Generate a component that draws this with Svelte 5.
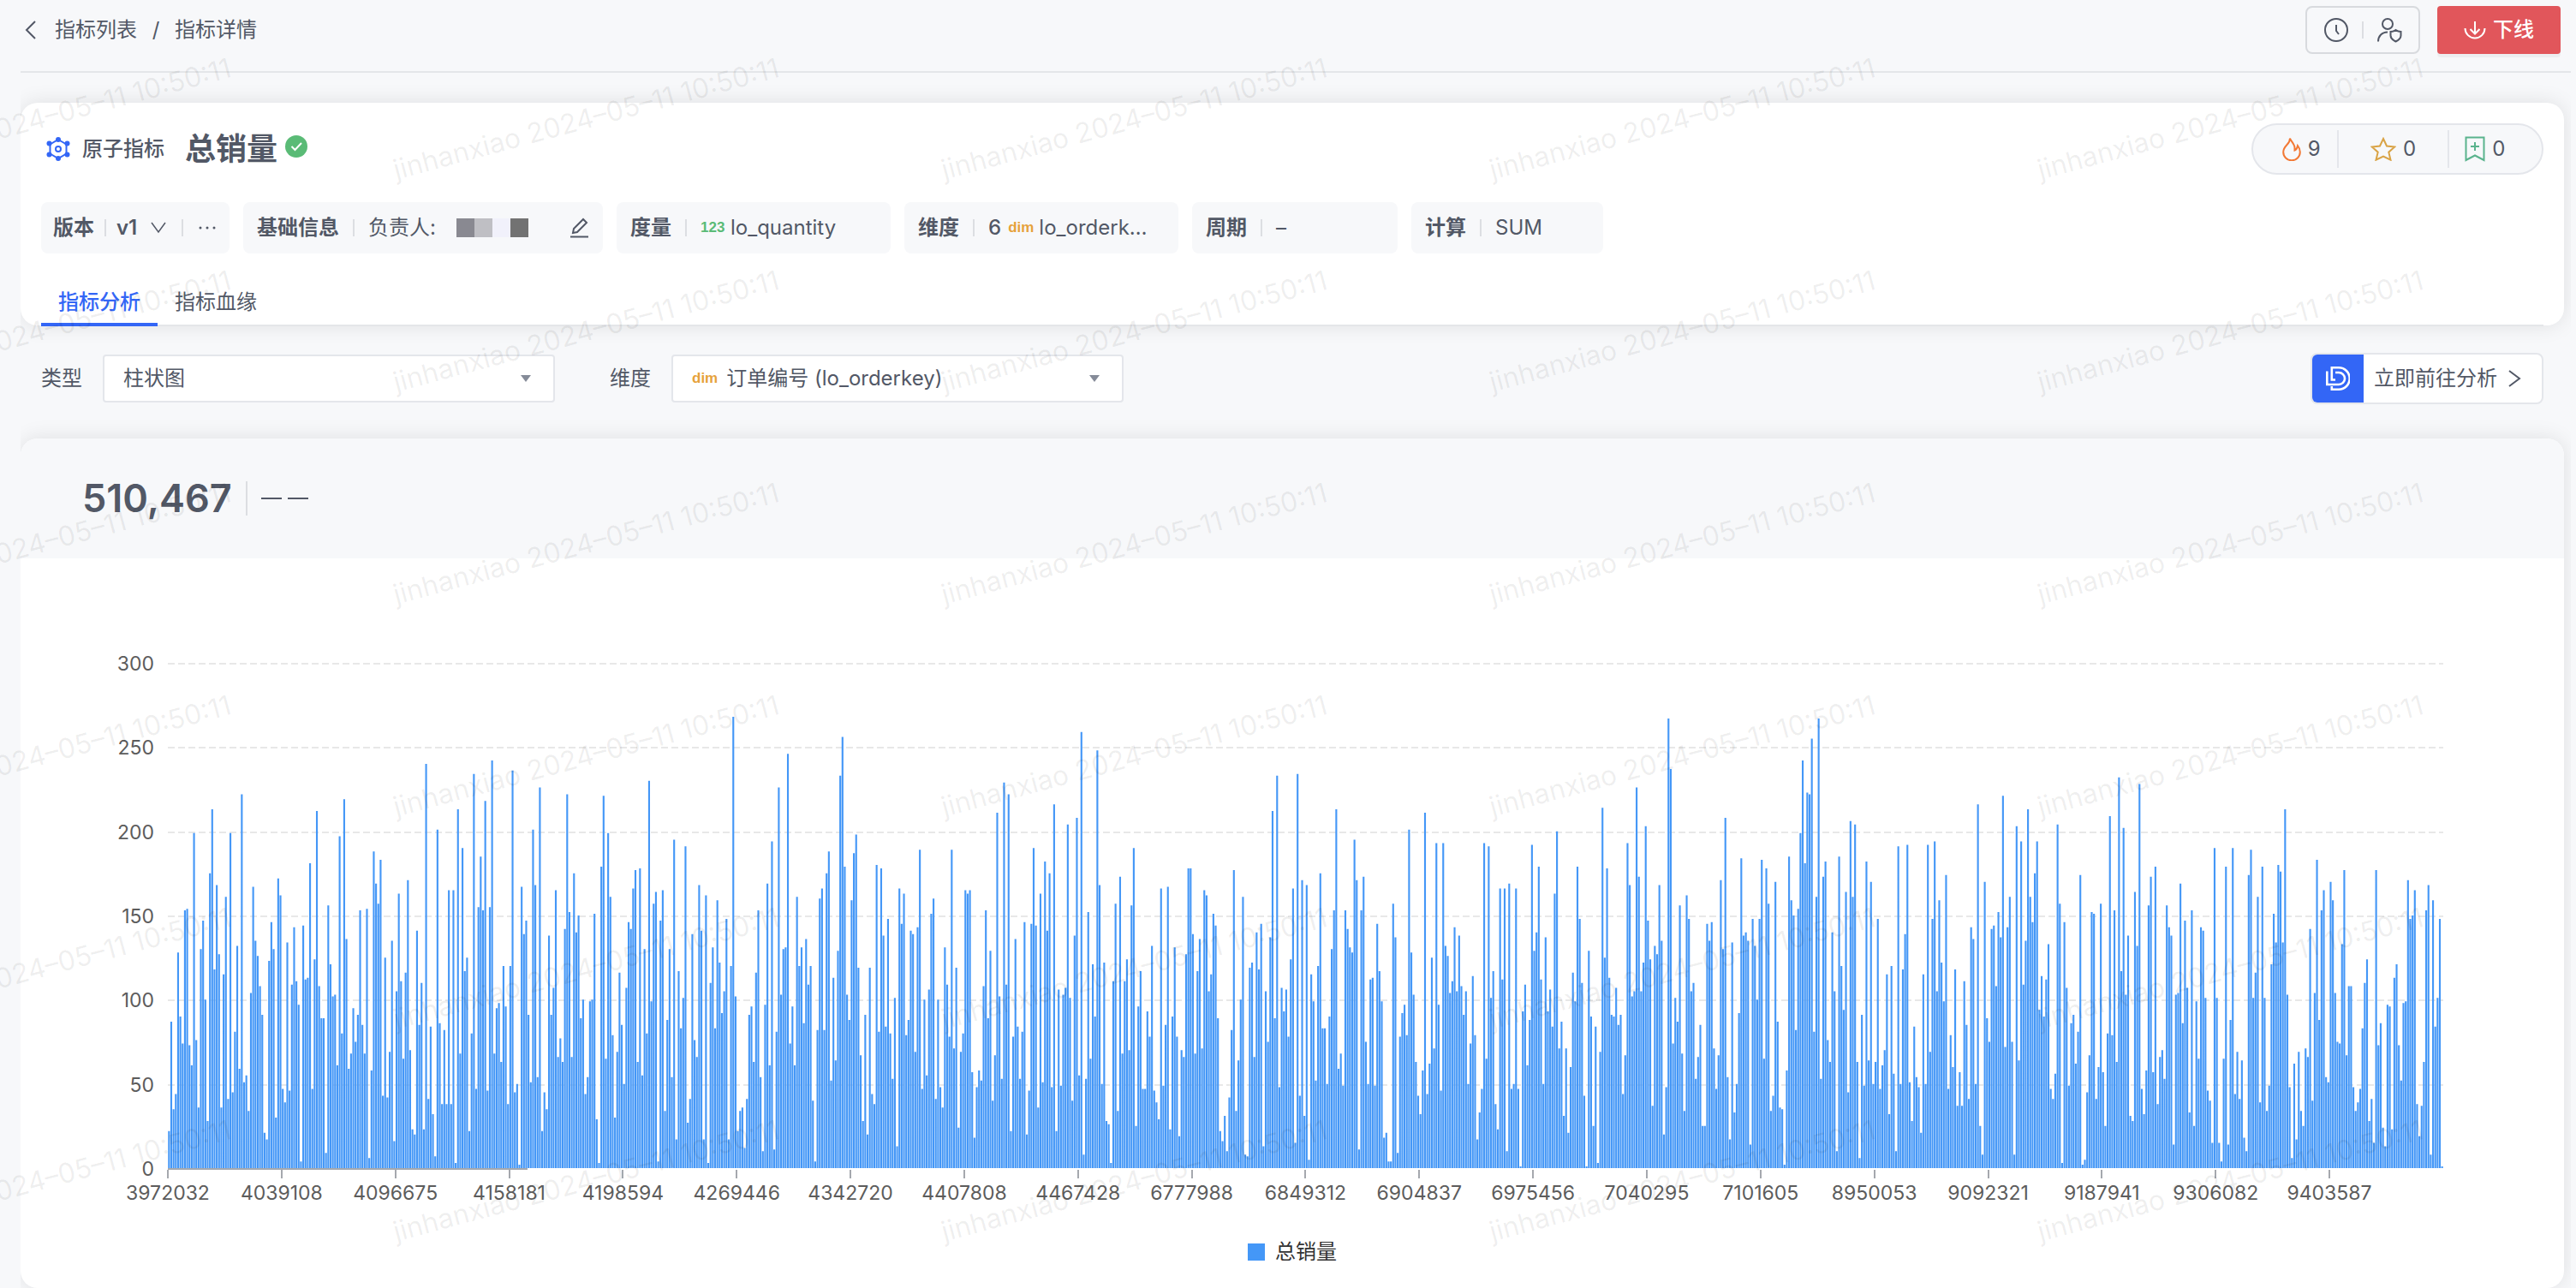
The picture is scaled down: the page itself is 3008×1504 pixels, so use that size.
<script>
  // quantity per lo_orderkey, in axis order
  const quantities = `
    22 87 35 44 128 90 74 153 154 73 61 199 76 36 130 147 100 28 175 213 118 168 127 36 115
    161 41 199 45 81 132 59 222 51 55 34 104 167 135 126 108 91 21 17 123 146 130 30 172 162
    47 39 134 46 109 143 111 97 4 144 112 113 181 47 124 212 108 89 89 9 156 121 102 103 61
    197 80 219 136 59 68 95 75 91 153 85 68 154 6 58 188 169 157 183 43 125 42 69 135 16
    105 163 111 65 116 171 70 23 20 141 85 110 23 240 41 84 32 7 201 86 38 82 38 165 38
    165 3 213 68 190 117 125 22 80 234 47 155 185 153 218 46 155 242 68 95 98 63 120 96 38
    120 236 45 50 2 167 139 147 91 51 201 168 54 226 22 45 35 138 91 107 165 66 77 63 142
    222 152 66 175 140 150 89 100 44 54 99 100 151 29 3 179 221 65 199 161 79 30 69 116 85
    50 107 146 142 166 177 63 178 55 130 80 230 99 157 164 4 147 165 34 88 130 54 195 17 117
    83 101 191 27 41 139 76 66 168 141 17 162 3 110 131 83 159 122 92 105 148 17 120 268 102
    22 34 36 12 41 91 96 63 116 153 54 10 97 169 61 194 11 81 226 103 130 131 246 74 96
    61 161 120 131 86 136 109 120 40 4 82 160 166 82 175 188 52 113 64 129 233 256 179 103 88
    159 187 198 119 67 28 91 20 119 44 38 180 81 178 138 84 148 80 53 101 13 166 145 163 79
    88 141 139 69 143 189 47 100 55 106 151 160 41 100 48 36 131 109 78 189 71 119 24 69 80
    165 163 165 57 18 48 58 52 108 153 89 129 40 67 211 102 53 229 109 222 22 78 136 84 53
    81 146 20 46 145 190 144 36 163 51 182 141 175 48 216 22 106 49 103 107 204 101 40 138 208
    55 259 8 53 152 65 121 90 248 168 50 122 28 26 3 111 157 34 173 68 111 124 70 156 190
    25 96 117 47 47 93 78 132 46 39 29 166 49 85 167 23 90 131 78 19 70 66 127 178 178
    139 68 117 136 71 165 162 105 115 151 144 89 22 16 31 10 42 82 177 34 64 100 161 8 7
    119 122 66 140 118 145 13 105 75 137 212 89 233 48 107 93 106 78 124 166 15 234 43 171 31
    168 5 115 99 52 120 175 83 83 50 90 130 153 213 59 68 49 153 142 131 128 195 171 11 153
    173 75 50 112 113 49 145 117 99 18 21 4 4 157 137 9 78 92 97 79 201 128 103 63 43
    32 58 211 44 62 125 71 193 97 46 193 132 126 104 111 143 105 138 108 91 105 50 74 114 79
    17 33 47 193 65 191 101 117 38 23 166 112 166 10 169 47 50 166 47 1 93 109 61 88 192
    129 140 179 112 50 137 93 106 84 163 200 71 87 31 71 21 60 116 99 179 148 110 43 1 129
    90 25 84 3 69 214 125 178 113 91 90 107 85 91 44 67 193 168 102 105 226 173 105 122 203
    147 124 37 132 127 168 135 20 48 267 237 74 101 87 156 68 34 162 148 105 110 53 66 85 25
    25 145 135 146 71 47 67 171 130 208 54 17 134 33 50 92 184 138 140 135 14 148 132 100 148
    183 65 178 157 34 43 170 87 36 35 2 58 185 159 150 82 154 199 242 181 223 222 255 81 161
    267 53 173 182 76 63 140 105 10 185 120 94 164 45 206 161 204 63 6 91 49 182 64 170 50
    63 148 47 61 70 115 32 120 56 10 191 50 118 139 192 51 28 84 54 48 21 115 50 192 69
    148 194 105 159 122 99 174 47 79 60 118 37 57 37 111 85 41 143 136 50 216 25 8 170 89
    75 142 144 108 152 137 221 72 143 161 75 8 203 64 194 109 135 213 161 146 175 194 94 114 90
    112 133 47 41 56 204 157 3 146 107 49 86 91 62 81 174 2 5 45 67 152 151 41 60 157
    57 25 80 209 79 153 63 232 117 202 103 138 31 28 164 132 228 47 32 58 156 173 57 179 38
    66 70 53 156 143 138 14 103 104 169 86 147 107 33 153 25 99 65 143 141 101 46 40 15 190
    101 15 4 65 179 14 88 190 44 69 41 64 18 10 174 189 101 116 161 39 179 101 34 49 121
    151 134 180 176 134 213 103 48 6 62 17 69 34 25 71 66 142 40 104 183 88 153 165 54 51
    170 159 104 75 74 133 177 67 108 108 48 34 39 47 83 110 124 28 41 15 177 73 86 24 13
    97 96 23 113 121 73 52 98 99 171 148 150 165 38 19 37 63 153 168 8 159 84 101 148 1
  `
    .trim()
    .split(/\s+/)
    .map(Number);

  const maxValue = 300;
  const yTicks = [300, 250, 200, 150, 100, 50, 0];
  const xTicks = [
    3972032, 4039108, 4096675, 4158181, 4198594, 4269446, 4342720, 4407808,
    4467428, 6777988, 6849312, 6904837, 6975456, 7040295, 7101605, 8950053,
    9092321, 9187941, 9306082, 9403587,
  ];

  const barPath = quantities
    .map((v, i) => `M${i + 0.1} ${maxValue}V${maxValue - v}h.8V${maxValue}z`)
    .join("");

  const watermarks = Array(30).fill("jinhanxiao 2024–05–11 10:50:11");

  let tab = $state("analysis");
  let chartType = $state("bar");
  let dimension = $state("lo_orderkey");
</script>

<div class="page">
  <header class="topbar">
    <nav class="breadcrumb">
      <a class="back" href="#list" aria-label="返回">
        <svg width="16" height="24" viewBox="0 0 16 24"><path d="M13 2 3 12l10 10" /></svg>
      </a>
      <a href="#list">指标列表</a>
      <span class="slash">/</span>
      <span>指标详情</span>
    </nav>
    <div class="actions">
      <div class="icon-group">
        <button aria-label="历史">
          <svg width="30" height="30" viewBox="0 0 30 30">
            <circle cx="15" cy="15" r="13" />
            <path d="M15 9v7l3 4" />
          </svg>
        </button>
        <i class="divider"></i>
        <button aria-label="权限">
          <svg width="30" height="30" viewBox="0 0 30 30">
            <circle cx="13" cy="8" r="6" />
            <path d="M2 28.500c0-6 4-11 11-11" />
            <path d="M22.500 15c2 1.500 4 2 6 2v4.500c0 3-3 5.500-6 7-3-1.500-6-4-6-7V17c2 0 4-.5 6-2z" />
          </svg>
        </button>
      </div>
      <button class="offline">
        <svg width="26" height="24" viewBox="0 0 26 24">
          <path d="M13 2v14M7.500 11l5.500 5.500L18.500 11M1.500 10a11.500 11.500 0 0 0 23 0" />
        </svg>
        下线
      </button>
    </div>
  </header>

  <main>
    <section class="card info">
      <div class="title-row">
        <svg class="atom" width="28" height="28" viewBox="0 0 28 28">
          <path d="M14 3 23.500 8.500v11L14 25l-9.500-5.500v-11z" />
          <circle cx="14" cy="14" r="3" />
          <g class="dots">
            <circle cx="14" cy="3" r="3" /><circle cx="24.500" cy="7.500" r="3" />
            <circle cx="24.500" cy="20.500" r="3" /><circle cx="14" cy="25" r="3" />
            <circle cx="3.500" cy="20.500" r="3" /><circle cx="3.500" cy="7.500" r="3" />
          </g>
        </svg>
        <span class="kind">原子指标</span>
        <h1>总销量</h1>
        <svg class="ok" width="26" height="26" viewBox="0 0 26 26">
          <circle cx="13" cy="13" r="13" />
          <path d="m7.500 13 4 4 7.500-8" />
        </svg>
        <div class="pill">
          <button class="hot">
            <svg width="22" height="28" viewBox="0 0 22 28">
              <path d="M9 1.500c1 3 5.500 7 5.500 11v3c1.500-.5 3-3 3.500-5.500 2 2.500 2.800 5 2.800 7.500A9.800 9.800 0 0 1 1.200 17.500c0-3.500 2-6 4.300-8.500C7.500 7 9 4 9 1.500z" />
            </svg>
            9
          </button>
          <i class="divider"></i>
          <button class="star">
            <svg width="30" height="28" viewBox="0 0 30 28">
              <path d="m15 2 4 8.500 9.300 1-7 6.200 2.200 9L15 22.500l-8.500 4.200 2.200-9-7-6.200 9.300-1z" />
            </svg>
            0
          </button>
          <i class="divider"></i>
          <button class="mark">
            <svg width="24" height="30" viewBox="0 0 24 30">
              <path d="M1.500 1.500h21V28L12 22.500 1.500 28z" />
              <path d="M12 7v10M7 12h10" />
            </svg>
            0
          </button>
        </div>
      </div>

      <div class="chips">
        <div class="chip version">
          <b>版本</b>
          <i class="divider"></i>
          <button class="ver">
            v1
            <svg width="18" height="14" viewBox="0 0 18 14"><path d="m1 1 8 11 8-11" /></svg>
          </button>
          <i class="divider"></i>
          <button class="more" aria-label="更多">
            <svg width="20" height="6" viewBox="0 0 20 6">
              <circle cx="2" cy="3" r="1.500" /><circle cx="10" cy="3" r="1.500" /><circle cx="18" cy="3" r="1.500" />
            </svg>
          </button>
        </div>
        <div class="chip base">
          <b>基础信息</b>
          <i class="divider"></i>
          <span>负责人:</span>
          <span class="mosaic"><i></i><i></i><i></i><i></i></span>
          <button class="edit" aria-label="编辑">
            <svg width="24" height="24" viewBox="0 0 24 24">
              <path d="M2 22.500h21M5 18l1-5L17 2l4 4-11 11z" />
            </svg>
          </button>
        </div>
        <div class="chip wide">
          <b>度量</b>
          <i class="divider"></i>
          <span class="tag num">123</span>
          <span>lo_quantity</span>
        </div>
        <div class="chip wide">
          <b>维度</b>
          <i class="divider"></i>
          <span class="count">6</span>
          <span class="tag dim">dim</span>
          <span>lo_orderk…</span>
        </div>
        <div class="chip period">
          <b>周期</b>
          <i class="divider"></i>
          <span>–</span>
        </div>
        <div class="chip calc">
          <b>计算</b>
          <i class="divider"></i>
          <span>SUM</span>
        </div>
      </div>

      <div class="tabs">
        <button class:active={tab === "analysis"} onclick={() => (tab = "analysis")}>指标分析</button>
        <button class:active={tab === "lineage"} onclick={() => (tab = "lineage")}>指标血缘</button>
      </div>
    </section>

    <div class="filters">
      <label for="type">类型</label>
      <div class="select">
        <select id="type" bind:value={chartType}>
          <option value="bar">柱状图</option>
        </select>
        <svg class="caret" width="12" height="8" viewBox="0 0 12 8"><path d="M0 0h12L6 8z" /></svg>
      </div>
      <label for="dimension">维度</label>
      <div class="select">
        <span class="tag dim">dim</span>
        <select id="dimension" bind:value={dimension}>
          <option value="lo_orderkey">订单编号 (lo_orderkey)</option>
        </select>
        <svg class="caret" width="12" height="8" viewBox="0 0 12 8"><path d="M0 0h12L6 8z" /></svg>
      </div>
      <a class="goto" href="#analysis">
        <span class="logo">
          <svg width="28" height="28" viewBox="0 0 28 28">
            <path d="M1.300 5.500V21H15a7 7 0 0 0 0-14h-4M6.800 23v3.700H15a12.700 12.700 0 0 0 0-25.400H6.800v14.200H11" />
          </svg>
        </span>
        立即前往分析
        <svg class="arrow" width="16" height="22" viewBox="0 0 16 22"><path d="m2 2 12 9-12 9" /></svg>
      </a>
    </div>

    <section class="card result">
      <div class="summary">
        <strong>510,467</strong>
        <i class="divider"></i>
        <i class="dash"></i>
        <i class="dash"></i>
      </div>
      <div class="chart">
        <div class="y-axis">
          {#each yTicks as tick}
            <span>{tick}</span>
          {/each}
        </div>
        <div class="plot">
          <div class="gridlines">
            {#each yTicks as tick}
              <i class:base={tick === 0}></i>
            {/each}
          </div>
          <svg class="bars" viewBox="0 0 1000 300" preserveAspectRatio="none">
            <path d={barPath} />
          </svg>
        </div>
        <div class="x-axis">
          {#each xTicks as tick}
            <span>{tick}</span>
          {/each}
        </div>
      </div>
      <div class="legend"><i></i>总销量</div>
    </section>
  </main>

  <div class="watermark" aria-hidden="true">
    <div class="tiles">
      {#each watermarks as mark}
        <span><em>{mark}</em></span>
      {/each}
    </div>
  </div>
</div>

<style>
  :global(body) {
    background: #f7f8fa;
  }
  .page {
    position: relative;
    overflow: hidden;
    padding: 0 6px 0 24px;
    color: #525866;
    font: 24px/36px Inter, "Noto Sans CJK SC", sans-serif;
  }
  .page * {
    box-sizing: border-box;
  }
  svg {
    display: block;
    flex: none;
    fill: none;
    stroke: currentColor;
    stroke-width: 2;
  }
  button {
    display: flex;
    align-items: center;
    padding: 0;
    border: 0;
    background: none;
    color: inherit;
    font: inherit;
    cursor: pointer;
  }
  a {
    color: inherit;
    text-decoration: none;
  }
  .divider {
    flex: none;
    width: 2px;
    height: 20px;
    background: #dcdee2;
  }
  .topbar {
    display: flex;
    justify-content: space-between;
    height: 85px;
    padding: 7px 12px 0 0;
    border-bottom: 2px solid #e4e6e9;
  }
  .breadcrumb {
    display: flex;
    align-items: center;
    height: 56px;
    padding-left: 4px;
  }
  .back {
    margin-right: 20px;
  }
  .slash {
    width: 44px;
    text-align: center;
  }
  .actions {
    display: flex;
    gap: 20px;
    height: 56px;
  }
  .icon-group {
    display: flex;
    align-items: center;
    justify-content: space-between;
    width: 134px;
    padding: 0 19px;
    border: 2px solid #d8dade;
    border-radius: 8px;
  }
  .offline {
    justify-content: center;
    gap: 8px;
    width: 144px;
    border-radius: 4px;
    background: #e1565b;
    box-shadow: 0 4px 0 rgba(0, 0, 0, 0.04);
    color: #fff;
    font-weight: 500;
  }
  main {
    overflow: hidden;
    padding: 35px 8px 0 0;
  }
  .card {
    border-radius: 20px;
    background: #fff;
    box-shadow: 0 0 24px rgba(0, 0, 0, 0.1);
  }
  .info {
    height: 260px;
    padding: 24px 24px 0;
  }
  .title-row {
    display: flex;
    align-items: center;
    height: 60px;
    padding-left: 6px;
  }
  .atom {
    margin-right: 14px;
    color: #3366f6;
  }
  .atom .dots {
    fill: currentColor;
    stroke: none;
  }
  .kind {
    font-weight: 500;
  }
  h1 {
    margin: 0 9px 0 24px;
    font-size: 36px;
    line-height: 48px;
    font-weight: 600;
  }
  .ok {
    margin-bottom: 6px;
    stroke: #fff;
  }
  .ok circle {
    fill: #5abb76;
    stroke: none;
  }
  .pill {
    display: flex;
    align-items: center;
    width: 341px;
    height: 60px;
    margin-left: auto;
    padding: 0 24px 0 14px;
    border: 2px solid #e4e6eb;
    border-radius: 30px;
    background: #f7f8fa;
  }
  .pill button {
    flex: 2;
    justify-content: center;
    gap: 8px;
  }
  .pill .star {
    flex: 3;
  }
  .pill .divider {
    height: 44px;
    background: #e4e6eb;
  }
  .hot svg {
    color: #f27935;
  }
  .star svg {
    color: #d9a345;
  }
  .mark svg {
    color: #5ab38d;
  }
  .chips {
    display: flex;
    gap: 16px;
    margin-top: 32px;
  }
  .chip {
    display: flex;
    align-items: center;
    height: 60px;
    padding: 0 16px;
    border-radius: 8px;
    background: #f7f8fa;
  }
  .chip b {
    font-weight: 600;
  }
  .chip .divider {
    margin: 0 16px;
  }
  .version {
    width: 220px;
    padding-left: 14px;
  }
  .version .divider {
    margin: 0 12px;
  }
  .ver {
    gap: 16px;
    padding-right: 6px;
    font-weight: 600;
  }
  .ver svg {
    stroke-width: 1.500;
  }
  .more {
    flex: 1;
    justify-content: flex-end;
  }
  .more svg {
    fill: currentColor;
    stroke: none;
  }
  .base {
    width: 420px;
  }
  .mosaic {
    display: flex;
    margin-left: 24px;
  }
  .mosaic i {
    width: 21px;
    height: 22px;
    background: #898991;
  }
  .mosaic i:nth-child(2) {
    background: #bfbfc4;
  }
  .mosaic i:nth-child(3) {
    background: #f1f1fb;
  }
  .mosaic i:nth-child(4) {
    background: #727272;
  }
  .edit {
    margin-left: auto;
  }
  .wide {
    width: 320px;
  }
  .period {
    width: 240px;
  }
  .calc {
    width: 224px;
  }
  .tag {
    min-width: 29px;
    margin-right: 6px;
    font: 700 17px/24px "Liberation Sans", sans-serif;
  }
  .num {
    color: #5abb76;
  }
  .dim {
    color: #e6a23c;
  }
  .count {
    margin-right: 8px;
    font-weight: 500;
  }
  .tabs {
    display: flex;
    height: 60px;
    margin-top: 25px;
    border-bottom: 2px solid #e4e6e9;
  }
  .tabs button {
    margin-bottom: -2px;
    padding: 8px 20px 0;
    border-bottom: 4px solid transparent;
  }
  .tabs .active {
    border-color: #3366f6;
    color: #3366f6;
    font-weight: 500;
  }
  .filters {
    display: flex;
    align-items: center;
    padding: 32px 24px 40px;
  }
  .filters label {
    margin-right: 24px;
  }
  .select {
    position: relative;
    display: flex;
    align-items: center;
    width: 528px;
    height: 56px;
    margin-right: 64px;
    padding-left: 22px;
    border: 2px solid #e4e6eb;
    border-radius: 4px;
    background: #fff;
  }
  .select .tag {
    margin-right: 10px;
  }
  select {
    flex: 1;
    height: 52px;
    padding: 0;
    border: 0;
    outline: 0;
    background: none;
    color: inherit;
    font: inherit;
    appearance: none;
  }
  .caret {
    position: absolute;
    right: 26px;
    pointer-events: none;
    fill: #858b98;
    stroke: none;
  }
  .goto {
    display: flex;
    align-items: center;
    height: 60px;
    margin-left: auto;
    padding-right: 24px;
    border: 2px solid #e4e6eb;
    border-radius: 8px;
    background: #fff;
  }
  .logo {
    display: flex;
    align-items: center;
    justify-content: center;
    width: 60px;
    height: 56px;
    margin-right: 12px;
    border-radius: 6px 0 0 6px;
    background: #3366f6;
    color: #fff;
  }
  .logo svg {
    stroke-width: 2.600;
  }
  .arrow {
    margin-left: 12px;
  }
  .result {
    height: 992px;
  }
  .summary {
    display: flex;
    align-items: center;
    height: 140px;
    padding-left: 72px;
    border-radius: 20px 20px 0 0;
    background: #f7f8fa;
  }
  .summary strong {
    font-size: 45px;
    line-height: 60px;
    font-weight: 600;
  }
  .summary .divider {
    height: 40px;
    margin: 0 9px 0 16px;
  }
  .dash {
    width: 24px;
    height: 2px;
    margin-left: 7px;
    background: #525866;
  }
  .chart {
    display: grid;
    grid-template-columns: 156px 1fr;
    column-gap: 16px;
    padding: 105px 141px 0 0;
    color: #5c5c5c;
    font-size: 23px;
  }
  .y-axis {
    display: flex;
    flex-direction: column;
    justify-content: space-between;
    align-items: flex-end;
    height: 626px;
    margin-bottom: -17px;
  }
  .plot {
    display: grid;
    height: 592px;
    margin-top: 17px;
  }
  .plot > * {
    grid-area: 1 / 1;
  }
  .gridlines {
    display: flex;
    flex-direction: column;
    justify-content: space-between;
  }
  .gridlines i {
    height: 2px;
    background: repeating-linear-gradient(90deg, #e8e8e8 0 8px, transparent 8px 12px);
  }
  .gridlines .base {
    background: #a5a8ae;
  }
  .bars {
    width: 100%;
    height: 590px;
    fill: #4497f7;
    stroke: none;
  }
  .x-axis {
    grid-column: 2;
    display: grid;
    grid-template-columns: repeat(20, 5%);
    text-align: center;
  }
  .x-axis span {
    position: relative;
    left: -50%;
    line-height: 34px;
  }
  .x-axis span::before {
    content: "";
    display: block;
    width: 2px;
    height: 10px;
    margin: 0 auto;
    background: #a5a8ae;
  }
  .legend {
    display: flex;
    align-items: center;
    justify-content: center;
    gap: 12px;
    margin-top: 34px;
    color: #333;
  }
  .legend i {
    width: 20px;
    height: 20px;
    background: #4497f7;
  }
  .watermark {
    position: absolute;
    inset: 0;
    overflow: hidden;
    pointer-events: none;
  }
  .tiles {
    display: grid;
    grid-template-columns: repeat(5, 640px);
    grid-auto-rows: 248px;
    margin-left: -192px;
    color: rgba(0, 0, 0, 0.07);
    font-size: 32px;
  }
  .tiles span {
    display: flex;
    align-items: center;
    padding: 30px 0 0 4px;
  }
  .tiles em {
    font-style: normal;
    white-space: nowrap;
    transform: rotate(-15deg);
  }
</style>
